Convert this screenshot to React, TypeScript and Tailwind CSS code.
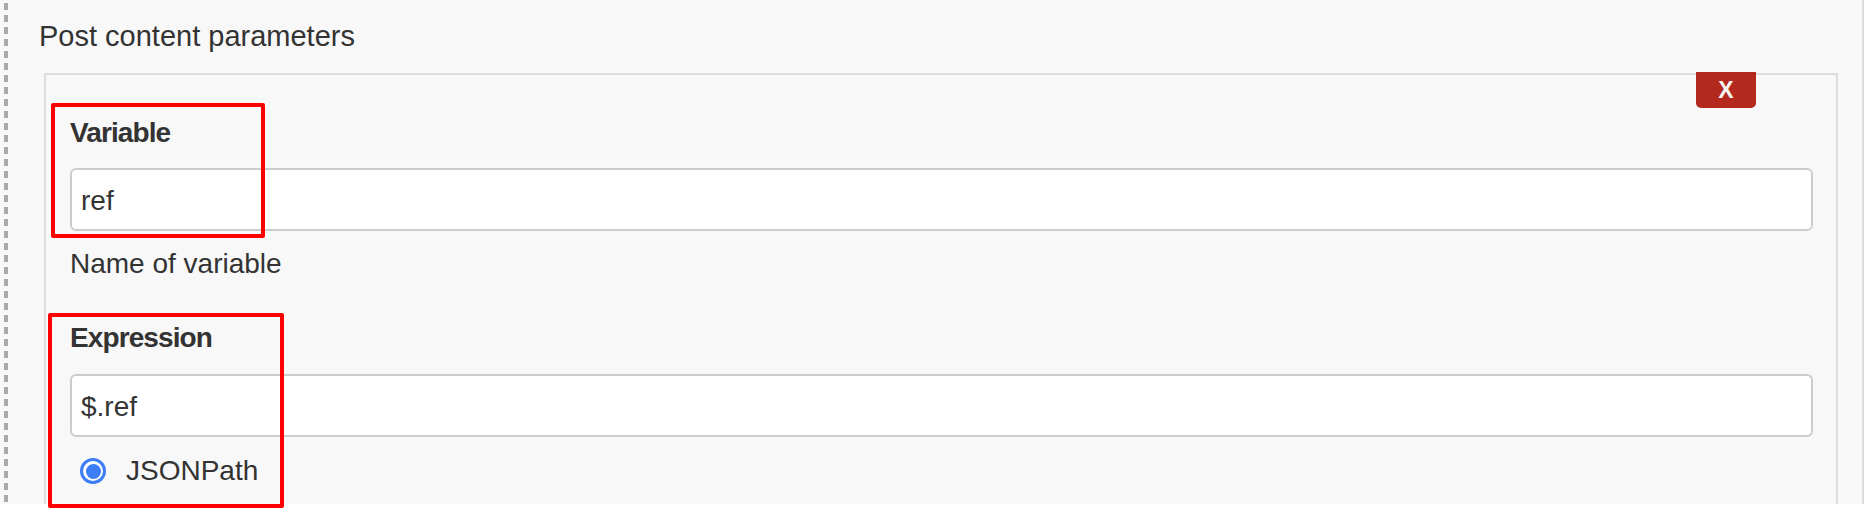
import React from "react";

export default function App() {
  return (
    <div
      className="relative w-[1864px] h-[512px] bg-white overflow-hidden text-[#333333]"
      style={{ fontFamily: '"Liberation Sans", Arial, Helvetica, sans-serif' }}
    >
      <div className="flex h-[504px] bg-[#f8f8f8] overflow-hidden">
        <div className="w-[4px] shrink-0" />
        <div className="w-[4px] shrink-0 bg-[repeating-linear-gradient(to_bottom,transparent_0,transparent_3px,#a9a9a9_3px,#a9a9a9_10px,transparent_10px,transparent_12px)]" />
        <div className="flex-1 flex flex-col pl-[31px] pr-[24px] border-r-2 border-[#dddddd]">
          <div className="mt-[20px] h-[32px] leading-[32px] text-[29px]">Post content parameters</div>
          <div className="relative mt-[21px] ml-[5px] flex-1 border-2 border-b-0 border-[#dddddd] pt-[42px] pl-[24px] pr-[23px]">
            <button className="absolute top-[-3px] right-[80px] w-[60px] h-[36px] rounded-b-[5px] bg-[#b4291d] flex items-center justify-center text-[#f4f4f4] text-[23px] font-bold leading-none pt-[1px]">
              X
            </button>
            <div className="h-[32px] leading-[32px] text-[28px] font-bold tracking-[-0.9px]">Variable</div>
            <div className="mt-[19px] h-[63px] border-2 border-[#cccccc] rounded-[6px] bg-white flex items-center pl-[9px] pt-[2px] text-[28px]">
              ref
            </div>
            <div className="mt-[17px] h-[32px] leading-[32px] text-[28px]">Name of variable</div>
            <div className="mt-[42px] h-[32px] leading-[32px] text-[28px] font-bold tracking-[-0.9px]">Expression</div>
            <div className="mt-[20px] h-[63px] border-2 border-[#cccccc] rounded-[6px] bg-white flex items-center pl-[9px] pt-[2px] text-[28px]">
              $.ref
            </div>
            <div className="mt-[18px] h-[32px] flex items-center">
              <div className="ml-[10px] w-[26px] h-[26px] rounded-full border-[3px] border-[#3d7df6] bg-white flex items-center justify-center">
                <div className="w-[15px] h-[15px] rounded-full bg-[#3d7df6]" />
              </div>
              <span className="ml-[20px] leading-[32px] text-[28px]">JSONPath</span>
            </div>
          </div>
        </div>
      </div>
      <div className="absolute left-[51px] top-[103px] w-[214px] h-[135px] border-4 border-[#ff0000] rounded-[2px]" />
      <div className="absolute left-[48px] top-[313px] w-[236px] h-[195px] border-4 border-[#ff0000] rounded-[2px]" />
    </div>
  );
}
